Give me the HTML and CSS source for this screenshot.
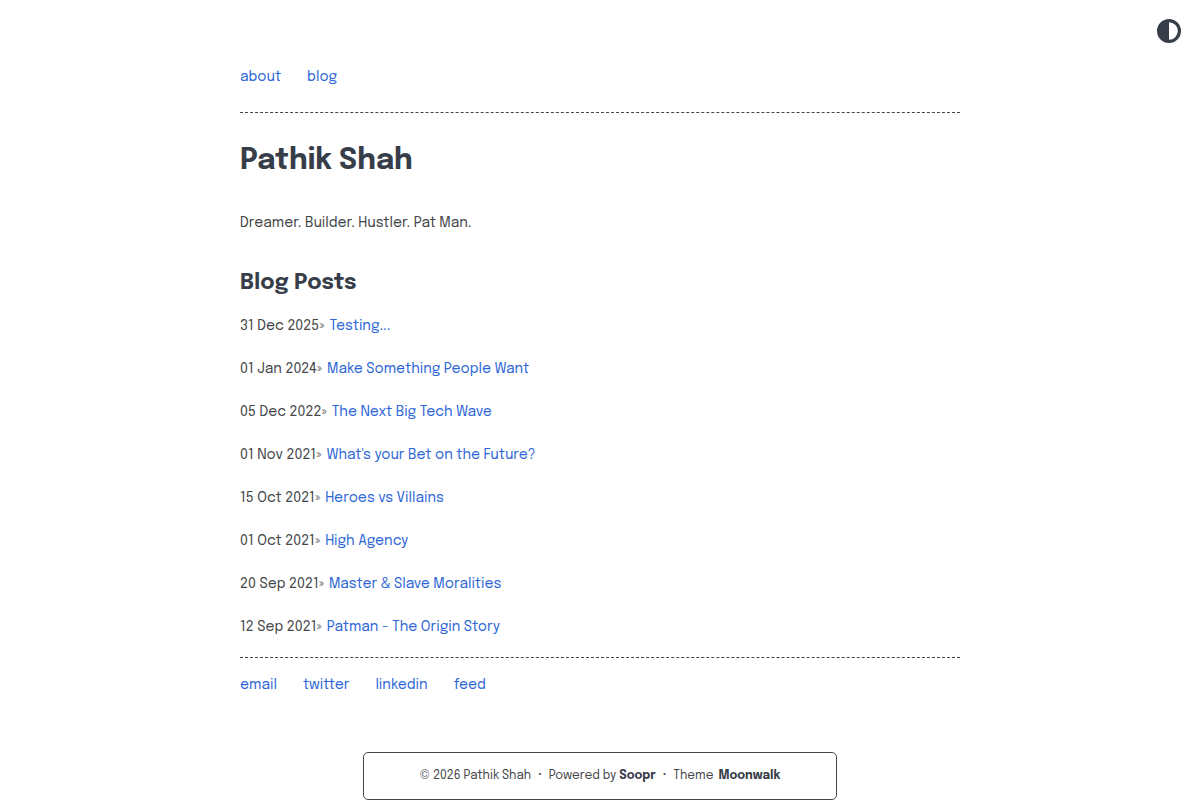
FILE: index.html
```html
<!DOCTYPE html>
<html lang="en">
<head>
	<meta charset="UTF-8">
	<meta name="viewport" content="width=device-width, initial-scale=1.0">
	<title>Pathik Shah</title>
	<link rel="stylesheet" href="styles.css">
</head>
<body>
	<button class="theme-toggle" type="button" aria-label="Toggle theme">
		<svg width="24" height="24" viewBox="0 0 24 24"><circle cx="12" cy="12" r="10.4" fill="none" stroke="currentColor" stroke-width="3.2"/><path d="M12 1a11 11 0 0 0 0 22z" fill="currentColor"/></svg>
	</button>
	<main class="wrapper">
		<nav class="nav">
			<a href="#about">about</a>
			<a href="#blog">blog</a>
		</nav>
		<h1>Pathik Shah</h1>
		<p class="intro">Dreamer. Builder. Hustler. Pat Man.</p>
		<h2 id="blog">Blog Posts</h2>
		<ul class="posts">
			<li>31 Dec 2025<span class="sep">»</span><a href="#">Testing...</a></li>
			<li>01 Jan 2024<span class="sep">»</span><a href="#">Make Something People Want</a></li>
			<li>05 Dec 2022<span class="sep">»</span><a href="#">The Next Big Tech Wave</a></li>
			<li>01 Nov 2021<span class="sep">»</span><a href="#">What's your Bet on the Future?</a></li>
			<li>15 Oct 2021<span class="sep">»</span><a href="#">Heroes vs Villains</a></li>
			<li>01 Oct 2021<span class="sep">»</span><a href="#">High Agency</a></li>
			<li>20 Sep 2021<span class="sep">»</span><a href="#">Master &amp; Slave Moralities</a></li>
			<li>12 Sep 2021<span class="sep">»</span><a href="#">Patman - The Origin Story</a></li>
		</ul>
		<div class="social">
			<a href="#">email</a>
			<a href="#">twitter</a>
			<a href="#">linkedin</a>
			<a href="#">feed</a>
		</div>
	</main>
	<footer class="footer">
		<span>© 2026 Pathik Shah</span>
		<span class="dot">·</span>
		<span>Powered by <a href="#">Soopr</a></span>
		<span class="dot">·</span>
		<span>Theme <a class="theme-name" href="#">Moonwalk</a></span>
	</footer>
</body>
</html>
```
FILE: styles.css
```css
* {
	box-sizing: border-box;
}
body {
	margin: 0;
	background: #fff;
	color: #434648;
	font-family: "Epilogue", "Inter", "Liberation Sans", sans-serif;
	font-size: 14px;
	line-height: 24px;
}
a {
	color: #2d66d6;
	text-decoration: none;
}
.theme-toggle {
	position: absolute;
	top: 19px;
	right: 19px;
	padding: 0;
	border: 0;
	background: none;
	color: #373d49;
	cursor: pointer;
}
.theme-toggle svg {
	display: block;
}
.wrapper {
	max-width: 720px;
	margin: 0 auto;
	padding-top: 65px;
}
.nav,
.social {
	display: flex;
	gap: 26px;
}
.nav {
	padding-bottom: 23px;
	border-bottom: 1px dashed #434648;
}
h1,
h2 {
	margin: 0;
	color: #373d49;
	font-weight: 700;
}
h1 {
	margin-top: 28px;
	font-size: 29px;
	line-height: 40px;
}
.intro {
	margin: 30px 0 0;
}
h2 {
	margin-top: 32px;
	font-size: 22px;
	line-height: 32px;
}
.posts {
	display: flex;
	flex-direction: column;
	gap: 19px;
	margin: 15px 0 0;
	padding: 0 0 18px;
	list-style: none;
	border-bottom: 1px dashed #434648;
}
.sep {
	margin-right: 5px;
}
.social {
	padding-top: 15px;
}
.footer {
	display: flex;
	justify-content: center;
	gap: 7px;
	width: fit-content;
	margin: 55px auto 0;
	padding: 11px 56px;
	border: 1px solid #434648;
	border-radius: 5px;
	font-size: 12px;
}
.footer a {
	color: #373d49;
	font-weight: 700;
}
.dot {
	font-weight: 700;
}
.theme-name {
	margin-left: 2px;
}
```
